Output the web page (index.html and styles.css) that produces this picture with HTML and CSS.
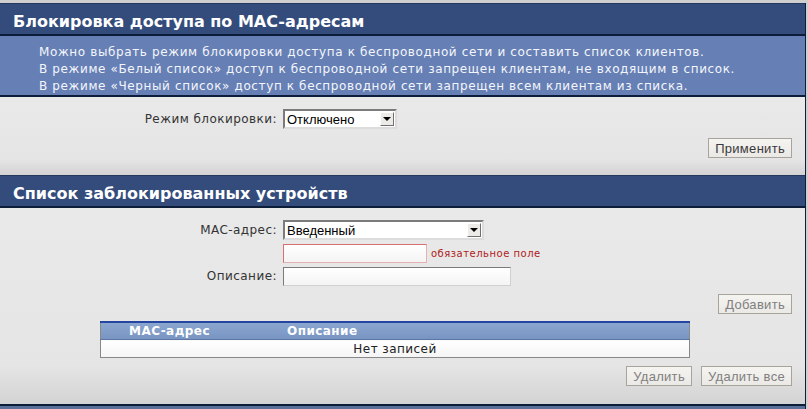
FILE: index.html
```html
<!DOCTYPE html>
<html lang="ru">
<head>
    <meta charset="UTF-8">
    <title>Блокировка доступа по MAC-адресам</title>
    <link rel="stylesheet" href="styles.css">
</head>
<body>
    <div class="page">
        <div class="header">Блокировка доступа по MAC-адресам</div>
        <div class="desc">
            Можно выбрать режим блокировки доступа к беспроводной сети и составить список клиентов.<br>
            В режиме «Белый список» доступ к беспроводной сети запрещен клиентам, не входящим в список.<br>
            В режиме «Черный список» доступ к беспроводной сети запрещен всем клиентам из списка.
        </div>
        <div class="content first">
            <div class="row">
                <span class="label">Режим блокировки:</span>
                <div class="select small"><span class="value">Отключено</span><span class="arrow"></span></div>
            </div>
            <div class="buttons">
                <button class="button">Применить</button>
            </div>
        </div>

        <div class="header">Список заблокированных устройств</div>
        <div class="content second">
            <div class="row">
                <span class="label">MAC-адрес:</span>
                <div class="select wide"><span class="value">Введенный</span><span class="arrow"></span></div>
            </div>
            <div class="row tight">
                <span class="label"></span>
                <input class="input error" type="text">
                <span class="required">обязательное поле</span>
            </div>
            <div class="row tight">
                <span class="label">Описание:</span>
                <input class="input long" type="text">
            </div>
            <div class="buttons add">
                <button class="button disabled">Добавить</button>
            </div>
            <table class="list">
                <tr class="head">
                    <th class="col-mac">MAC-адрес</th>
                    <th>Описание</th>
                </tr>
                <tr class="empty">
                    <td colspan="2">Нет записей</td>
                </tr>
            </table>
            <div class="buttons del">
                <button class="button disabled">Удалить</button>
                <button class="button disabled">Удалить все</button>
            </div>
        </div>
        <div class="footer"></div>
    </div>
</body>
</html>
```

FILE: styles.css
```css
body {
    margin: 0;
    background: #cfcfcf;
    font-family: "DejaVu Sans", Verdana, sans-serif;
    font-size: 12px;
    overflow: hidden;
}
.page {
    width: 805px;
    margin-top: 3px;
    border-right: 1px solid #0e1f3c;
}
.header {
    background: #344c7c;
    border-top: 1px solid #24375e;
    border-bottom: 2px solid #0c1d3a;
    color: #fff;
    font-weight: bold;
    font-size: 16px;
    height: 27px;
    line-height: 30px;
    padding: 3px 0 0 13px;
}
.desc {
    background: #667fb4;
    color: #f4f6fb;
    padding: 8px 0 0 39px;
    height: 51px;
    line-height: 17px;
    letter-spacing: 0.62px;
    border-bottom: 2px solid #0c1d3a;
}
.content {
    background: linear-gradient(#e9e9e9, #e5e5e5 80%, #d3d3d3);
    color: #333;
    letter-spacing: 0.45px;
}
.content.first {
    height: 66px;
    padding-top: 12px;
}
.content.second {
    height: 184px;
    padding-top: 12px;
}
.row {
    display: flex;
    align-items: center;
    height: 20px;
}
.row.tight {
    margin-top: 3px;
}
.label {
    width: 277px;
    text-align: right;
    margin-right: 6px;
}
.select {
    display: flex;
    align-items: center;
    height: 16px;
    background: #fff;
    border: 2px solid;
    border-color: #7b7b7b #dcdcdc #dcdcdc #7b7b7b;
    font-family: "Liberation Sans", Arial, sans-serif;
    font-size: 13px;
    color: #000;
    letter-spacing: 0;
}
.select.small {
    width: 110px;
}
.select.wide {
    width: 197px;
}
.select .value {
    flex: 1;
    padding-left: 2px;
}
.select .arrow {
    width: 14px;
    height: 14px;
    margin-right: 1px;
    background: #ecebe8;
    border: 1px solid;
    border-color: #fff #707070 #707070 #fff;
    box-sizing: border-box;
    display: flex;
    align-items: center;
    justify-content: center;
}
.select .arrow::after {
    content: "";
    border-left: 4px solid transparent;
    border-right: 4px solid transparent;
    border-top: 4px solid #000;
}
.input {
    height: 19px;
    box-sizing: border-box;
    border: 1px solid #7b7b7b;
    border-right-color: #d0d0d0;
    border-bottom-color: #d0d0d0;
    background: linear-gradient(#ffffff, #f4f4f4);
    margin: 0;
    padding: 0 2px;
}
.input.error {
    width: 144px;
    border-color: #d77070 #e4b0b0 #e4b0b0 #d77070;
}
.input.long {
    width: 228px;
}
.required {
    color: #b02020;
    font-size: 10px;
    margin-left: 4px;
    letter-spacing: 0.5px;
}
.buttons {
    display: flex;
    justify-content: flex-end;
    gap: 9px;
    padding-right: 13px;
}
.content.first .buttons {
    margin-top: 9px;
}
.buttons.add {
    margin-top: 8px;
}
.buttons.del {
    margin-top: 8px;
}
.button {
    font-family: "Liberation Sans", Arial, sans-serif;
    font-size: 13px;
    color: #3a3a3a;
    background: linear-gradient(#f5f4f1, #ebe9e5);
    border: 1px solid #a8a39c;
    height: 20px;
    padding: 0 6px;
    letter-spacing: 0.3px;
}
.button.disabled {
    color: #808080;
}
.list {
    margin: 7px 0 0 100px;
    width: 590px;
    border-collapse: collapse;
    border: 1px solid #888;
}
.list .head th {
    background: linear-gradient(#8ba6cf, #7894c2);
    border-top: 2px solid #2446a0;
    border-bottom: 1px solid #5d76a4;
    color: #fff;
    font-weight: bold;
    text-align: left;
    height: 14px;
    padding: 1px 0 1px 0;
    line-height: 14px;
}
.list .col-mac {
    width: 158px;
    padding-left: 28px !important;
}
.list .empty td {
    background: linear-gradient(#fff, #f5f5f5);
    text-align: center;
    height: 17px;
    padding: 0;
    color: #222;
}
.footer {
    height: 10px;
    border-top: 2px solid #0c1d3a;
    background: #5a6e9a;
}
```
